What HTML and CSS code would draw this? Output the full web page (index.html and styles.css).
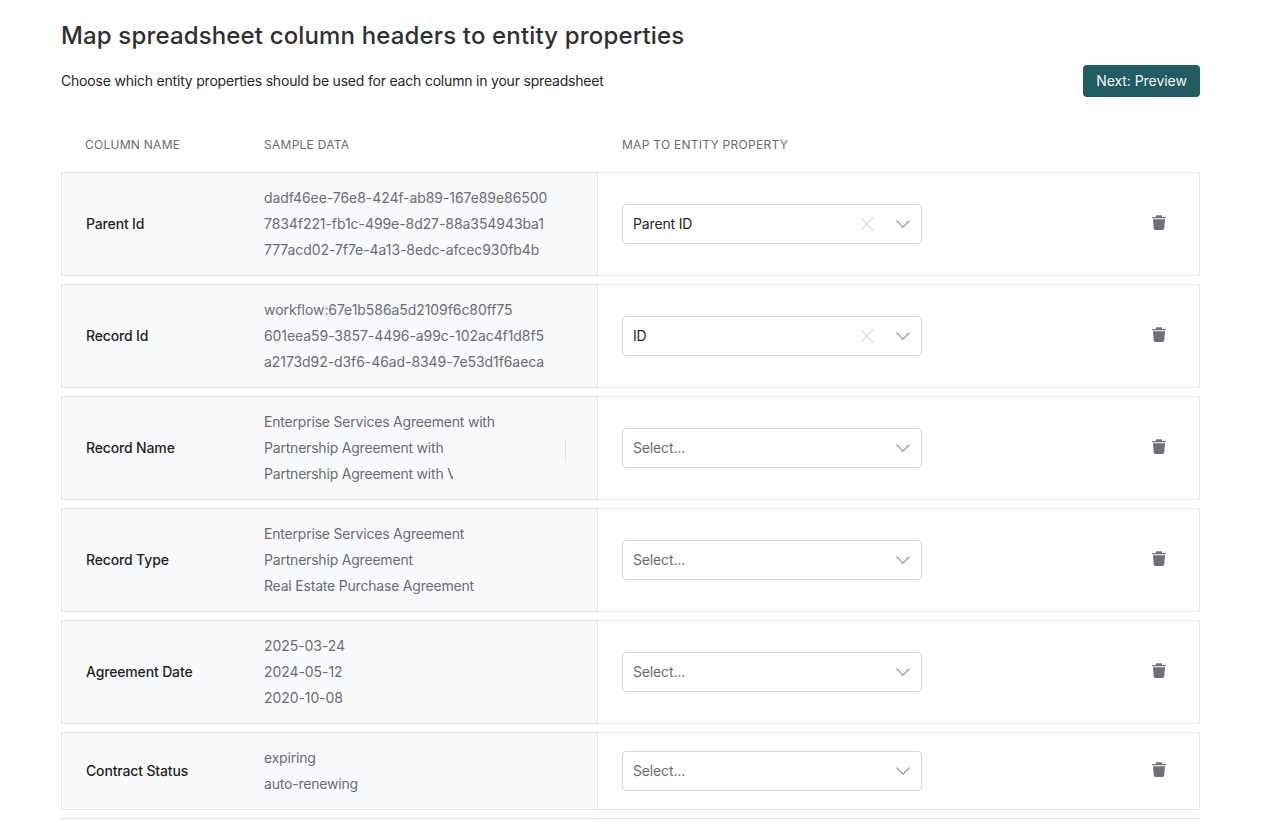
FILE: index.html
```html
<!DOCTYPE html>
<html lang="en">
<head>
<meta charset="utf-8">
<title>Map spreadsheet column headers</title>
<link rel="stylesheet" href="styles.css">
</head>
<body>
<svg class="defs" width="0" height="0" aria-hidden="true">
  <symbol id="trash" viewBox="0 0 14 15"><path d="M5 0.2h4c.5 0 .9.3 1 .8l.2.9h3c.4 0 .8.3.8.7v.6H0v-.6c0-.4.4-.7.8-.7h3L4 1c.1-.5.5-.8 1-.8z"/><path d="M1 4.2h12l-.8 9.4c-.1.8-.7 1.4-1.5 1.4H3.300c-.8 0-1.400-.6-1.500-1.400z"/></symbol>
  <symbol id="chev" viewBox="0 0 14 8"><path d="M.5.7 7 7.200 13.500.7" fill="none" stroke="currentColor" stroke-width="1.100"/></symbol>
  <symbol id="cross" viewBox="0 0 14 14"><path d="M.7.7l12.600 12.600M13.300.7.700 13.300" fill="none" stroke="currentColor" stroke-width="1.100"/></symbol>
</svg>
<main class="page">
  <h1 class="title">Map spreadsheet column headers to entity properties</h1>
  <div class="intro">
    <p class="lead">Choose which entity properties should be used for each column in your spreadsheet</p>
    <button class="next">Next: Preview</button>
  </div>
  <div class="heads">
    <span class="h-name">Column name</span>
    <span class="h-sample">Sample data</span>
    <span class="h-map">Map to entity property</span>
  </div>
  <section class="rows">
    <article class="row">
      <div class="left"><div class="name">Parent Id</div><div class="samples hex"><div>dadf46ee-76e8-424f-ab89-167e89e86500</div><div>7834f221-fb1c-499e-8d27-88a354943ba1</div><div>777acd02-7f7e-4a13-8edc-afcec930fb4b</div></div></div>
      <div class="right"><div class="select"><span class="value">Parent ID</span><svg class="cross"><use href="#cross"/></svg><svg class="chev"><use href="#chev"/></svg></div><svg class="trash"><use href="#trash"/></svg></div>
    </article>
    <article class="row">
      <div class="left"><div class="name">Record Id</div><div class="samples hex"><div>workflow:67e1b586a5d2109f6c80ff75</div><div>601eea59-3857-4496-a99c-102ac4f1d8f5</div><div>a2173d92-d3f6-46ad-8349-7e53d1f6aeca</div></div></div>
      <div class="right"><div class="select"><span class="value">ID</span><svg class="cross"><use href="#cross"/></svg><svg class="chev"><use href="#chev"/></svg></div><svg class="trash"><use href="#trash"/></svg></div>
    </article>
    <article class="row">
      <div class="left"><div class="name">Record Name</div><div class="samples clipped"><div class="clip-a">Enterprise Services Agreement with Vendor</div><div class="clip-b">Partnership Agreement with</div><div class="clip-c">Partnership Agreement with Vendor</div></div></div>
      <div class="right"><div class="select"><span class="placeholder">Select...</span><svg class="chev"><use href="#chev"/></svg></div><svg class="trash"><use href="#trash"/></svg></div>
    </article>
    <article class="row">
      <div class="left"><div class="name">Record Type</div><div class="samples"><div>Enterprise Services Agreement</div><div>Partnership Agreement</div><div>Real Estate Purchase Agreement</div></div></div>
      <div class="right"><div class="select"><span class="placeholder">Select...</span><svg class="chev"><use href="#chev"/></svg></div><svg class="trash"><use href="#trash"/></svg></div>
    </article>
    <article class="row">
      <div class="left"><div class="name">Agreement Date</div><div class="samples hex"><div>2025-03-24</div><div>2024-05-12</div><div>2020-10-08</div></div></div>
      <div class="right"><div class="select"><span class="placeholder">Select...</span><svg class="chev"><use href="#chev"/></svg></div><svg class="trash"><use href="#trash"/></svg></div>
    </article>
    <article class="row">
      <div class="left"><div class="name">Contract Status</div><div class="samples"><div>expiring</div><div>auto-renewing</div></div></div>
      <div class="right"><div class="select"><span class="placeholder">Select...</span><svg class="chev"><use href="#chev"/></svg></div><svg class="trash"><use href="#trash"/></svg></div>
    </article>
    <article class="row">
      <div class="left"><div class="name"></div><div class="samples"><div>&nbsp;</div><div>&nbsp;</div></div></div>
      <div class="right"></div>
    </article>
  </section>
</main>
</body>
</html>
```

FILE: styles.css
```css
* { box-sizing: border-box; }
html, body { margin: 0; height: 100%; overflow: hidden; background: #fff; }
body { font-family: Inter, "Liberation Sans", sans-serif; font-size: 14px; color: #27272a; }
.defs { position: absolute; }
.page { height: 820px; overflow: hidden; padding: 21px 63px 0 61px; }
.title { margin: 0; font-size: 24px; line-height: 30px; font-weight: 500; letter-spacing: 0.15px; color: #2f2f34; }
.intro { display: flex; justify-content: space-between; align-items: center; margin-top: 14px; height: 32px; }
.lead { margin: 0; font-size: 14px; line-height: 20px; letter-spacing: -0.2px; color: #27272a; }
.next { width: 117px; height: 32px; border: 0; border-radius: 4px; background: #225c63; color: #f4f7f7; font: 400 14px/20px Inter, "Liberation Sans", sans-serif; letter-spacing: -0.05px; padding: 0; }
.heads { display: flex; align-items: center; height: 16px; margin-top: 40px; font-size: 12px; line-height: 16px; letter-spacing: 0.27px; text-transform: uppercase; color: #6b6b76; }
.h-name { width: 203px; padding-left: 24px; }
.h-sample { width: 358px; }
.rows { display: flex; flex-direction: column; gap: 8px; margin-top: 19px; }
.row { display: flex; border: 1px solid #e3e4e9; flex: none; }
.left { display: flex; align-items: center; width: 536px; flex: none; padding: 12px 0 12px 24px; background: #f9fafb; border-right: 1px solid #e3e4e9; }
.name { width: 178px; flex: none; font-weight: 500; letter-spacing: -0.15px; color: #1f1f24; line-height: 20px; }
.samples { position: relative; flex: 1; color: #6b6b76; line-height: 26px; letter-spacing: -0.2px; white-space: nowrap; }
.hex { letter-spacing: -0.07px; }
.clip-a, .clip-b, .clip-c { overflow: hidden; }
.clip-a { width: 235px; }
.clip-c { width: 189px; }
.clipped::after { content: ""; position: absolute; left: 301px; top: 30px; height: 23px; width: 1px; background: #e3e4e9; }
.right { flex: 1; display: flex; align-items: center; padding-left: 24px; }
.select { display: flex; align-items: center; width: 300px; height: 40px; padding-left: 10px; padding-bottom: 1px; border: 1px solid #d5d5dc; border-radius: 4px; background: #fff; }
.value { flex: 1; letter-spacing: -0.15px; color: #27272a; }
.placeholder { flex: 1; letter-spacing: -0.15px; color: #6b6b76; }
.cross { width: 14px; height: 14px; color: #d8d8df; margin-right: 22px; margin-top: 1px; }
.chev { width: 14px; height: 8px; color: #8a8a94; margin-right: 11px; margin-top: 1px; }
.trash { width: 14px; height: 15px; margin-left: 230px; margin-top: -3px; fill: #6f7079; }
```
